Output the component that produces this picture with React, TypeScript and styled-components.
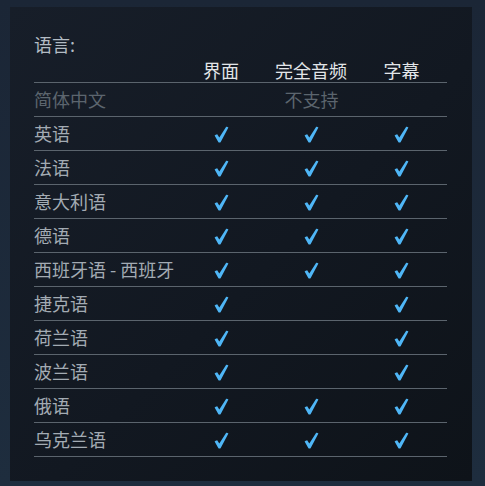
import React from "react";
import styled, { createGlobalStyle } from "styled-components";

const Global = createGlobalStyle`
  html, body { margin: 0; padding: 0; background: #1b2838; }
  body { font-family: "Noto Sans CJK SC", "Noto Sans", sans-serif; }
`;

const Page = styled.div`
  width: 485px;
  height: 486px;
  box-sizing: border-box;
  padding: 7px 13px 5px 10px;
  background: linear-gradient(180deg, #1b2636 0%, #1e2d3e 100%);
`;

const Panel = styled.div`
  height: 100%;
  box-sizing: border-box;
  padding: 25px 25px 24px 24px;
  background: linear-gradient(135deg, #171e29 0%, #121821 55%, #0e1319 100%);
`;

const Title = styled.div`
  font-size: 18px;
  line-height: 24px;
  color: #b3bcc4;
  margin-bottom: 2px;
`;

const Table = styled.table`
  width: 413px;
  border-collapse: collapse;
  table-layout: fixed;
`;

const HeadCell = styled.th<{ $w?: number }>`
  width: ${(p) => (p.$w ? `${p.$w}px` : "auto")};
  padding: 0;
  height: 24px;
  line-height: 24px;
  font-size: 18px;
  font-weight: normal;
  color: #e2e5e8;
  text-align: center;
  border-bottom: 1px solid #5b646d;
`;

const Row = styled.tr`
  border-bottom: 1px solid #5b646d;
`;

const LangCell = styled.td<{ $muted?: boolean }>`
  height: 33px;
  padding: 0;
  font-size: 18px;
  line-height: 33px;
  white-space: nowrap;
  color: ${(p) => (p.$muted ? "#5c656e" : "#a3abb3")};
`;

const CheckCell = styled.td`
  padding: 0;
  text-align: center;
  line-height: 0;
  vertical-align: middle;
`;

const CheckIcon = styled.svg`
  width: 15px;
  height: 17px;
  display: inline-block;
  margin-top: 1px;
  fill: #4fb6f6;
`;

const NoteCell = styled.td`
  padding: 0;
  text-align: center;
  font-size: 18px;
  line-height: 33px;
  color: #5c656e;
`;

type Lang = { name: string; ui: boolean; audio: boolean; sub: boolean };

const langs: Lang[] = [
  { name: "英语", ui: true, audio: true, sub: true },
  { name: "法语", ui: true, audio: true, sub: true },
  { name: "意大利语", ui: true, audio: true, sub: true },
  { name: "德语", ui: true, audio: true, sub: true },
  { name: "西班牙语 - 西班牙", ui: true, audio: true, sub: true },
  { name: "捷克语", ui: true, audio: false, sub: true },
  { name: "荷兰语", ui: true, audio: false, sub: true },
  { name: "波兰语", ui: true, audio: false, sub: true },
  { name: "俄语", ui: true, audio: true, sub: true },
  { name: "乌克兰语", ui: true, audio: true, sub: true },
];

const Check = ({ on }: { on: boolean }) => (
  <CheckCell>
    {on && (
      <CheckIcon viewBox="0 0 15 17">
        <path d="M0.6 9.6 Q1.6 8.4 3.2 8.2 L5.3 11.6 L12.2 0.8 Q13.4 0.6 14.4 1.6 L6.6 16.2 Q5.4 16.8 4.4 16.2 Z" />
      </CheckIcon>
    )}
  </CheckCell>
);

export default function App() {
  return (
    <>
      <Global />
      <Page>
        <Panel>
          <Title>语言:</Title>
          <Table>
            <thead>
              <tr>
                <HeadCell $w={142} />
                <HeadCell $w={90}>界面</HeadCell>
                <HeadCell $w={90}>完全音频</HeadCell>
                <HeadCell $w={91}>字幕</HeadCell>
              </tr>
            </thead>
            <tbody>
              <Row>
                <LangCell $muted>简体中文</LangCell>
                <NoteCell colSpan={3}>不支持</NoteCell>
              </Row>
              {langs.map((l) => (
                <Row key={l.name}>
                  <LangCell>{l.name}</LangCell>
                  <Check on={l.ui} />
                  <Check on={l.audio} />
                  <Check on={l.sub} />
                </Row>
              ))}
            </tbody>
          </Table>
        </Panel>
      </Page>
    </>
  );
}
